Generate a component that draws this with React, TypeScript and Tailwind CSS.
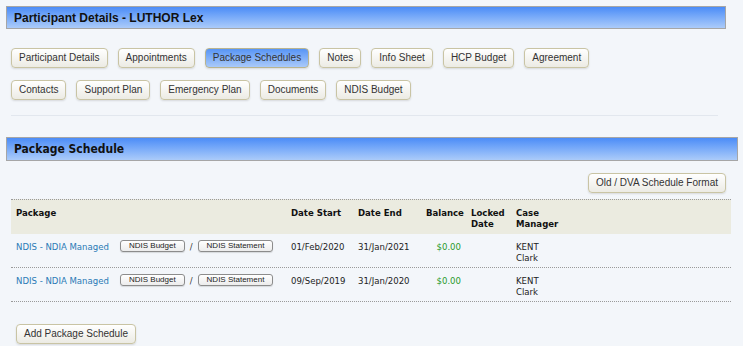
import React from "react";

const tabsRow1 = ["Participant Details", "Appointments", "Package Schedules", "Notes", "Info Sheet", "HCP Budget", "Agreement"];
const tabsRow2 = ["Contacts", "Support Plan", "Emergency Plan", "Documents", "NDIS Budget"];

function Tab({ label, active }: { label: string; active?: boolean }) {
  return (
    <button
      className={
        "h-[20px] px-[7px] rounded-[4px] border text-[10px] leading-none text-[#333] shadow-[0_1px_2px_rgba(0,0,0,0.12)] " +
        (active
          ? "border-[#b9b48f] bg-gradient-to-b from-[#5895f5] to-[#a9c9f9] text-[#1c2530]"
          : "border-[#c9c4a4] bg-gradient-to-b from-white to-[#ecebe4]")
      }
    >
      {label}
    </button>
  );
}

function SmallBtn({ label }: { label: string }) {
  return (
    <button className="h-[12px] px-[8px] rounded-[3px] border border-[#8c8c8c] bg-gradient-to-b from-white to-[#ececec] text-[8px] leading-none text-[#222] font-['Liberation_Sans',Arial,sans-serif] shadow-[0_1px_1px_rgba(0,0,0,0.12)]">
      {label}
    </button>
  );
}

const rows = [
  { start: "01/Feb/2020", end: "31/Jan/2021" },
  { start: "09/Sep/2019", end: "31/Jan/2020" },
];

export default function App() {
  const cell = "px-[5px]";
  return (
    <div className="min-h-screen w-[743px] bg-[#f3f6fa] pt-[6px] font-['Liberation_Sans',Arial,sans-serif] text-[#222]">
      <div className="ml-[6px] w-[720px] h-[23px] border border-[#a6a6a6] bg-gradient-to-b from-[#4b8cf7] to-[#abcbf9] pl-[7px] flex items-center text-[12px] font-bold text-[#111]">
        Participant Details - LUTHOR Lex
      </div>

      <div className="pl-[11px] mt-[19px] flex flex-col gap-[12px]">
        <div className="flex gap-[10px]">
          {tabsRow1.map((t) => (
            <Tab key={t} label={t} active={t === "Package Schedules"} />
          ))}
        </div>
        <div className="flex gap-[10px]">
          {tabsRow2.map((t) => (
            <Tab key={t} label={t} />
          ))}
        </div>
      </div>

      <div className="ml-[11px] mt-[15px] w-[707px] h-px bg-[#e2e7ee]" />

      <div className="mt-[21px] ml-[6px] w-[732px] h-[24px] border border-[#a6a6a6] bg-gradient-to-b from-[#4b8cf7] to-[#abcbf9] pl-[7px] flex items-center text-[12px] font-bold text-[#111] font-['DejaVu_Sans_Condensed','DejaVu_Sans',sans-serif] [font-stretch:condensed]">
        Package Schedule
      </div>

      <div className="mt-[12px] w-[731px] flex justify-end pr-[5px]">
        <Tab label="Old / DVA Schedule Format" />
      </div>

      <div className="mt-[6px] ml-[11px] w-[720px] font-['DejaVu_Sans_Condensed','DejaVu_Sans',sans-serif] [font-stretch:condensed] text-[9.5px] leading-[11px]">
        <div className="grid grid-cols-[275px_67px_68px_45px_45px_1fr] border-t border-dotted border-[#9a9a9a] bg-[#ebebe0] h-[35px] pt-[7px] font-bold text-[#111]">
          <div className={cell}>Package</div>
          <div className={cell}>Date Start</div>
          <div className={cell}>Date End</div>
          <div className={cell + " text-right"}>Balance</div>
          <div className={cell}>
            Locked
            <br />
            Date
          </div>
          <div className={cell}>
            Case
            <br />
            Manager
          </div>
        </div>
        {rows.map((r, i) => (
          <div
            key={i}
            className="grid grid-cols-[275px_67px_68px_45px_45px_1fr] border-b border-dotted border-[#9a9a9a] h-[34px] pt-[7px] text-[#222]"
          >
            <div className={cell + " flex items-start"}>
              <span className="w-[104px] shrink-0 text-[#2a7ab6]">NDIS - NDIA Managed</span>
              <div className="flex items-center gap-[5px] -mt-[1px]">
                <SmallBtn label="NDIS Budget" />
                <span className="text-[#333]">/</span>
                <SmallBtn label="NDIS Statement" />
              </div>
            </div>
            <div className={cell}>{r.start}</div>
            <div className={cell}>{r.end}</div>
            <div className={cell + " text-right text-[#2a9a2a]"}>$0.00</div>
            <div className={cell}></div>
            <div className={cell}>
              KENT
              <br />
              Clark
            </div>
          </div>
        ))}
      </div>

      <div className="mt-[18px] ml-[16px] pb-[7px]">
        <Tab label="Add Package Schedule" />
      </div>
    </div>
  );
}
